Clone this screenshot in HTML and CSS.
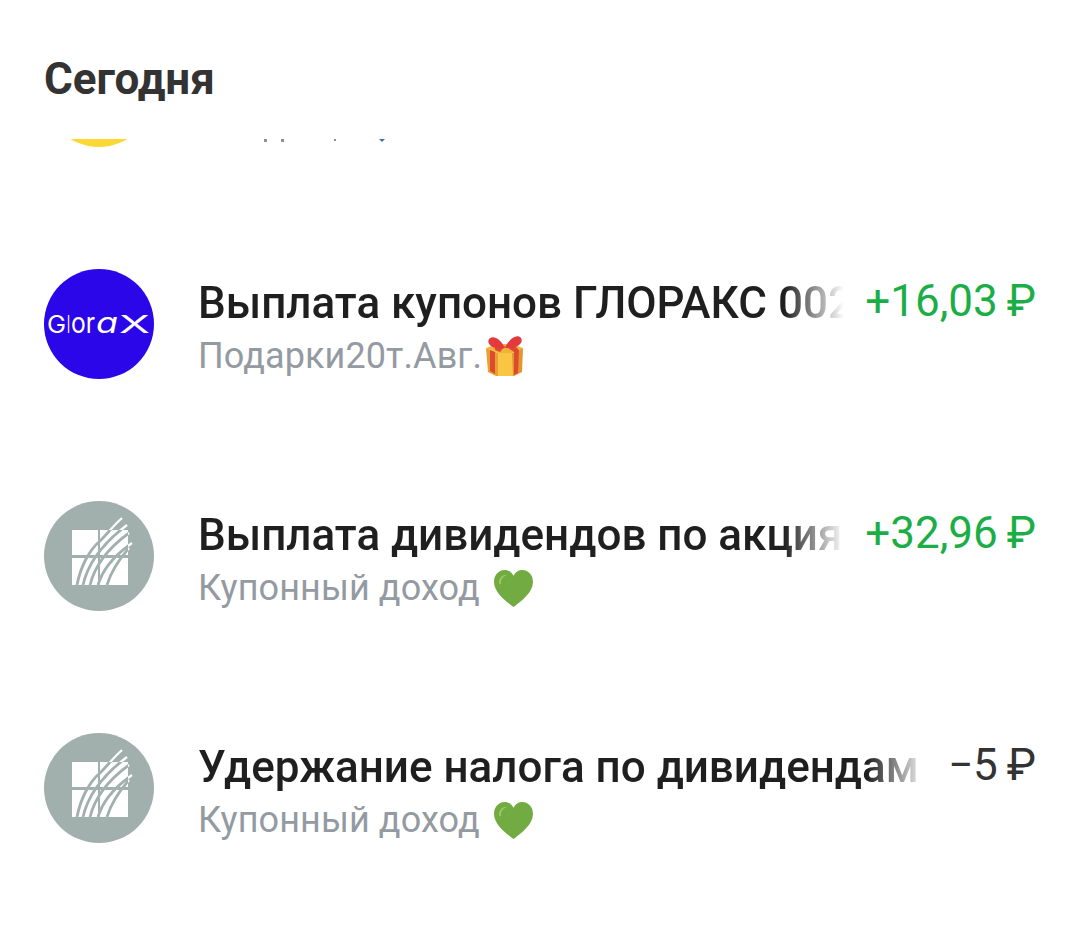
FILE: index.html
```html
<!DOCTYPE html>
<html lang="ru">
<head>
    <meta charset="UTF-8">
    <meta name="viewport" content="width=device-width, initial-scale=1.0">
    <title>Сегодня</title>
    <link rel="stylesheet" href="styles.css">
</head>
<body>
    <svg class="defs" width="0" height="0" aria-hidden="true">
        <defs>
            <clipPath id="window-panes">
                <rect x="28" y="29" width="56" height="55"/>
            </clipPath>
            <path id="bank-arcs" d="M33 84C36 68 44 50 56 40 64 32 70 24 78 17M39 84C43 66 54 46 83 24M46 84C50 68 60 50 85 32M54 84C58 70 68 56 88 42M63 84C66 74 72 62 85 47"/>
        </defs>
        <symbol id="bank-logo" viewBox="0 0 110 110">
            <circle cx="55" cy="55" r="55" fill="#a1afad"/>
            <rect x="28" y="29" width="26" height="25" fill="#fff"/>
            <rect x="56" y="29" width="28" height="25" fill="#fff"/>
            <rect x="28" y="57" width="26" height="27" fill="#fff"/>
            <rect x="56" y="57" width="28" height="27" fill="#fff"/>
            <use href="#bank-arcs" fill="none" stroke="#fff" stroke-width="2.2"/>
            <use href="#bank-arcs" fill="none" stroke="#a1afad" stroke-width="2.8" clip-path="url(#window-panes)"/>
        </symbol>
        <symbol id="heart" viewBox="0 0 42 38">
            <path d="M21 38C12 31 1 23 1 12 1 5 6 0 12 0c4 0 7 2 9 6 2-4 5-6 9-6 6 0 11 5 11 12 0 11-11 19-20 26z" fill="#73ab43"/>
            <path d="M6 13c0-4 3-8 7-8 1 0 1 1 0 1-3 1-5 4-5 8 0 1-2 1-2-1z" fill="#97c767"/>
        </symbol>
    </svg>

    <header class="day-header">
        <h1>Сегодня</h1>
    </header>

    <main class="operations">
        <!-- ряд, прокрученный под заголовок: виден только низ -->
        <div class="scrolled-row">
            <span class="scrolled-avatar"></span>
            <span class="speck speck-a"></span>
            <span class="speck speck-b"></span>
            <span class="speck speck-c"></span>
            <span class="speck speck-d"></span>
        </div>

        <div class="operation">
            <svg class="avatar" viewBox="0 0 110 110">
                <circle cx="55" cy="55" r="55" fill="#2a06e8"/>
                <!-- буквы логотипа разной ширины, поэтому каждая часть растянута отдельно -->
                <text x="3" y="64" class="logo-text" textLength="19" lengthAdjust="spacingAndGlyphs">G</text>
                <text x="23" y="64" class="logo-text" textLength="3" lengthAdjust="spacingAndGlyphs">l</text>
                <text x="27" y="64" class="logo-text logo-small" textLength="24" lengthAdjust="spacingAndGlyphs">or</text>
                <text x="52" y="64" class="logo-text logo-small logo-italic" textLength="22" lengthAdjust="spacingAndGlyphs">a</text>
                <text x="75" y="64" class="logo-text" textLength="31" lengthAdjust="spacingAndGlyphs">X</text>
            </svg>
            <div class="operation-body">
                <div class="operation-name">Выплата купонов ГЛОРАКС 002Р-01</div>
                <div class="operation-note">Подарки20т.Авг.<svg class="emoji gift" viewBox="0 0 40 40">
                        <path d="M1 12l12 5v24L3 36z" fill="#eaa02f"/>
                        <path d="M27 17l11-5-1 24-10 5z" fill="#e5952a"/>
                        <path d="M13 12h14v5l1 24H13z" fill="#f8c545"/>
                        <path d="M1 12l12-4h14l11 4-11 5H13z" fill="#f2b13a"/>
                        <path d="M5 14l5 2v22l-5-3zM29 16l5-2-1 23-4 2zM10 9l5 1 9 0 5-1 5 5-5 2-9-6-5 6-5-2z" fill="#dc4a32"/>
                        <path d="M20 12C15 2 8-1 4 3 1 8 8 14 20 12zM20 12C25 1 33-2 36 2 39 7 32 13 20 12z" fill="#e23a3d"/>
                    </svg></div>
            </div>
            <div class="operation-sum income">+16,03&thinsp;₽</div>
        </div>

        <div class="operation">
            <svg class="avatar"><use href="#bank-logo"/></svg>
            <div class="operation-body">
                <div class="operation-name">Выплата дивидендов по акциям Сбербанк</div>
                <div class="operation-note">Купонный доход <svg class="emoji heart"><use href="#heart"/></svg></div>
            </div>
            <div class="operation-sum income">+32,96&thinsp;₽</div>
        </div>

        <div class="operation">
            <svg class="avatar"><use href="#bank-logo"/></svg>
            <div class="operation-body">
                <div class="operation-name">Удержание налога по дивидендам Сбербанк</div>
                <div class="operation-note">Купонный доход <svg class="emoji heart"><use href="#heart"/></svg></div>
            </div>
            <div class="operation-sum">−5&thinsp;₽</div>
        </div>
    </main>
</body>
</html>
```

FILE: styles.css
```css
body {
    margin: 0;
    background: #fff;
    font-family: Roboto, "Liberation Sans", sans-serif;
    color: #1f1f1f;
}
.defs {
    display: block;
    height: 0;
}
.day-header {
    padding: 56px 44px 0;
    height: 83px;
}
h1 {
    margin: 0;
    font-size: 44px;
    line-height: 46px;
    font-weight: 700;
    color: #333;
}
.operations {
    padding: 0 43px 0 44px;
}
.scrolled-row {
    position: relative;
    height: 8px;
    overflow: hidden;
}
.scrolled-avatar {
    position: absolute;
    left: 0;
    bottom: 0;
    width: 110px;
    height: 110px;
    border-radius: 50%;
    background: #fcd835;
}
.speck {
    position: absolute;
    top: 0;
    width: 3px;
    height: 3px;
    background: #8b9199;
}
.speck-a { left: 220px; }
.speck-b { left: 237px; }
.speck-c { left: 290px; width: 2px; height: 2px; }
.speck-d { left: 335px; width: 6px; background: #3d74a8; clip-path: polygon(0 0, 100% 0, 50% 100%); }
.operation {
    display: flex;
    align-items: flex-start;
    height: 110px;
    margin-top: 122px;
}
.avatar {
    flex: none;
    width: 110px;
    height: 110px;
    margin-right: 44px;
}
.logo-text {
    font-family: Inter, Roboto, sans-serif;
    font-size: 24px;
    font-weight: 400;
    fill: #fff;
}
.logo-small {
    font-size: 28px;
}
.logo-italic {
    font-style: italic;
}
.operation-body {
    flex: 1;
    min-width: 0;
    margin-right: 21px;
}
.operation-name {
    font-size: 44px;
    line-height: 52px;
    font-weight: 500;
    white-space: nowrap;
    overflow: hidden;
    margin-top: 8px;
    -webkit-mask-image: linear-gradient(to left, transparent 0, #000 60px);
    mask-image: linear-gradient(to left, transparent 0, #000 60px);
}
.operation-note {
    display: flex;
    align-items: center;
    margin-top: 4px;
    font-size: 36px;
    line-height: 46px;
    letter-spacing: 0.1px;
    color: #949aa2;
    white-space: pre;
}
.emoji {
    flex: none;
}
.gift {
    width: 40px;
    height: 40px;
    margin-left: 3px;
}
.heart {
    width: 41px;
    height: 37px;
    margin-left: 4px;
}
.operation-sum {
    flex: none;
    font-size: 44px;
    line-height: 52px;
    margin-top: 6px;
    color: #333;
}
.income {
    color: #1cae46;
}
```
